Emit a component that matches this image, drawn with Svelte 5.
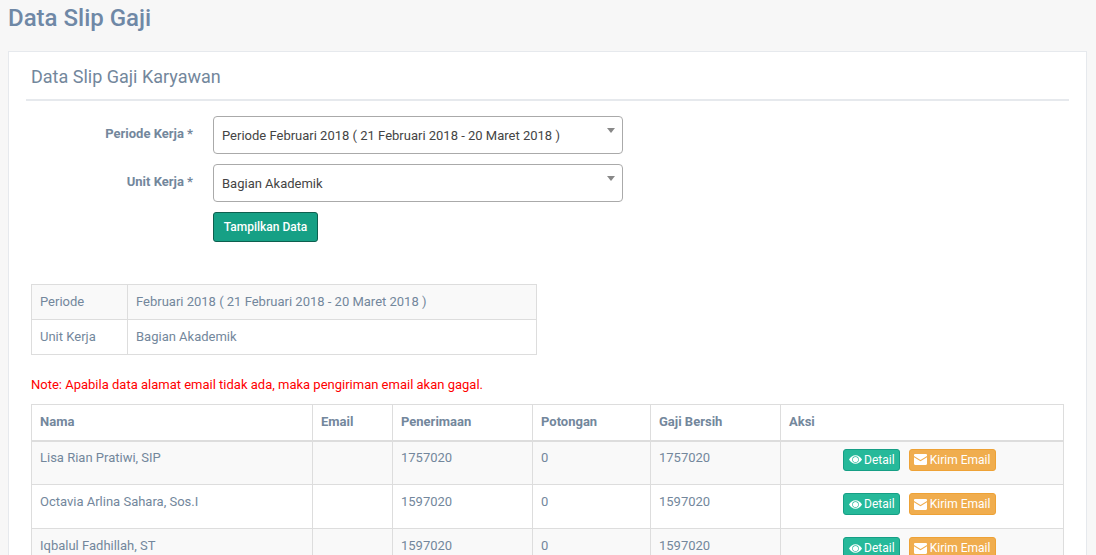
<script>
  const rows = [
    { nama: 'Lisa Rian Pratiwi, SIP', terima: '1757020', potong: '0', bersih: '1757020' },
    { nama: 'Octavia Arlina Sahara, Sos.I', terima: '1597020', potong: '0', bersih: '1597020' },
    { nama: 'Iqbalul Fadhillah, ST', terima: '1597020', potong: '0', bersih: '1597020' }
  ];
</script>

<div class="page">
  <h1>Data Slip Gaji</h1>
  <section class="card">
    <h2>Data Slip Gaji Karyawan</h2>
    <form class="form">
      <div class="field">
        <span class="label">Periode Kerja *</span>
        <div class="select">Periode Februari 2018 ( 21 Februari 2018 - 20 Maret 2018 )</div>
      </div>
      <div class="field">
        <span class="label">Unit Kerja *</span>
        <div class="select">Bagian Akademik</div>
      </div>
      <div class="field">
        <span class="label"></span>
        <button type="button" class="submit">Tampilkan Data</button>
      </div>
    </form>

    <table class="info">
      <tbody>
        <tr class="odd"><td class="c1">Periode</td><td>Februari 2018 ( 21 Februari 2018 - 20 Maret 2018 )</td></tr>
        <tr><td class="c1">Unit Kerja</td><td>Bagian Akademik</td></tr>
      </tbody>
    </table>

    <p class="note">Note: Apabila data alamat email tidak ada, maka pengiriman email akan gagal.</p>

    <table class="data">
      <colgroup>
        <col style="width:281px" /><col style="width:80px" /><col style="width:140px" />
        <col style="width:118px" /><col style="width:130px" /><col style="width:283px" />
      </colgroup>
      <thead>
        <tr><th>Nama</th><th>Email</th><th>Penerimaan</th><th>Potongan</th><th>Gaji Bersih</th><th>Aksi</th></tr>
      </thead>
      <tbody>
        {#each rows as r, i}
          <tr class:odd={i % 2 === 0}>
            <td>{r.nama}</td>
            <td></td>
            <td>{r.terima}</td>
            <td>{r.potong}</td>
            <td>{r.bersih}</td>
            <td class="aksi">
              <button type="button" class="btn detail">
                <svg width="13" height="11" viewBox="0 0 26 22"><path fill="currentColor" fill-rule="evenodd" d="M13 2.500C7.500 2.500 3 6.300 0 11c3 4.700 7.500 8.500 13 8.500S23 15.700 26 11C23 6.300 18.500 2.500 13 2.500zM13 4.500a6.500 6.500 0 1 1 0 13 6.500 6.500 0 0 1 0-13zM13 5.800a5.200 5.200 0 1 0 0 10.400 5.200 5.200 0 0 0 0-10.400z"/></svg>
                Detail
              </button>
              <button type="button" class="btn email">
                <svg width="13" height="11" viewBox="0 0 13 11"><path fill="currentColor" d="M0 1.200C0 .5.500 0 1.200 0h10.600c.7 0 1.200.5 1.200 1.200v.8L6.500 6 0 2zM0 3.300l6.500 4L13 3.300v6.500c0 .7-.5 1.200-1.200 1.200H1.200C.5 11 0 10.500 0 9.800z"/></svg>
                Kirim Email
              </button>
            </td>
          </tr>
        {/each}
      </tbody>
    </table>
  </section>
</div>

<style>
  :global(body) {
    margin: 0;
    background: #f7f7f7;
    font-family: Roboto, "Liberation Sans", sans-serif;
    font-size: 13px;
    color: #73879c;
  }
  .page {
    height: 555px;
    overflow: hidden;
    padding: 0 9px 0 8px;
    box-sizing: border-box;
  }
  h1 {
    margin: 0;
    height: 51px;
    padding-top: 4px;
    box-sizing: border-box;
    font-size: 24px;
    line-height: 29px;
    font-weight: 500;
    color: #6f88a6;
  }
  .card {
    background: #fff;
    border: 1px solid #e6e9ed;
    padding: 0 17px 20px;
  }
  h2 {
    margin: 0 0 15px;
    height: 49px;
    padding: 13px 0 0 5px;
    box-sizing: border-box;
    border-bottom: 2px solid #e6e9ed;
    font-size: 18px;
    line-height: 24px;
    font-weight: 400;
    color: #73879c;
  }
  .form {
    display: flex;
    flex-direction: column;
    gap: 10px;
    margin-bottom: 42px;
  }
  .field {
    display: flex;
    gap: 20px;
    align-items: flex-start;
  }
  .label {
    width: 167px;
    text-align: right;
    font-weight: 700;
    line-height: 36px;
    flex: none;
  }
  .select {
    position: relative;
    width: 410px;
    height: 38px;
    box-sizing: border-box;
    border: 1px solid #aaa;
    border-radius: 4px;
    padding: 0 8px;
    line-height: 38px;
    color: #444;
  }
  .select::after {
    content: "";
    position: absolute;
    top: 11px;
    right: 7px;
    border-style: solid;
    border-width: 5px 4px 0;
    border-color: #888 transparent transparent;
  }
  .submit {
    width: 105px;
    height: 30px;
    background: #16a085;
    border: 1px solid #0e5f4f;
    border-radius: 3px;
    color: #fff;
    font: 500 12px Roboto, sans-serif;
    padding: 0;
  }
  table {
    border-collapse: collapse;
    table-layout: fixed;
    margin-left: 5px;
    color: #73879c;
  }
  td, th {
    border: 1px solid #ddd;
    padding: 8px;
    text-align: left;
    vertical-align: top;
    line-height: 18px;
    box-sizing: border-box;
  }
  .odd td { background: #f9f9f9; }
  .info { width: 506px; }
  .info td { height: 35px; }
  .info .c1 { width: 96px; }
  .note {
    margin: 21px 0 10px 5px;
    line-height: 18px;
    color: #f00;
  }
  .data { width: 1032px; }
  .data th {
    height: 36px;
    border-bottom-width: 2px;
    font-weight: 700;
  }
  .data td { height: 44px; }
  .data tbody tr:first-child td { padding-top: 7px; }
  .data td.aksi {
    text-align: center;
    padding: 8px 13px 0 8px;
    white-space: nowrap;
  }
  .btn {
    display: inline-flex;
    align-items: center;
    justify-content: center;
    gap: 3px;
    height: 22px;
    box-sizing: border-box;
    padding: 0;
    border-radius: 3px;
    color: #fff;
    font: 400 12px Roboto, sans-serif;
    vertical-align: top;
  }
  .detail {
    width: 57px;
    gap: 2px;
    background: #26b99a;
    border: 1px solid #169f85;
    margin-right: 5px;
  }
  .email {
    width: 87px;
    background: #f0ad4e;
    border: 1px solid #eea236;
  }
</style>
